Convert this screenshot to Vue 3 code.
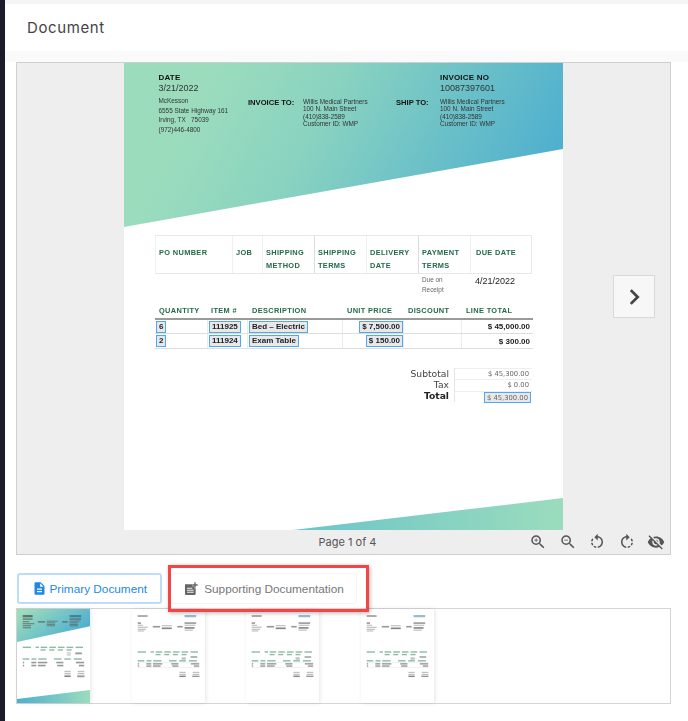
<script setup>
const terms = [
  ['PO NUMBER'], ['JOB'], ['SHIPPING', 'METHOD'], ['SHIPPING', 'TERMS'],
  ['DELIVERY', 'DATE'], ['PAYMENT', 'TERMS'], ['DUE DATE']
]
const lineHeads = ['QUANTITY', 'ITEM #', 'DESCRIPTION', 'UNIT PRICE', 'DISCOUNT', 'LINE TOTAL']
const lines = [
  { qty: '6', item: '111925', desc: 'Bed – Electric', price: '$ 7,500.00', total: '$ 45,000.00' },
  { qty: '2', item: '111924', desc: 'Exam Table', price: '$ 150.00', total: '$ 300.00' }
]
const addressee = ['Willis Medical Partners', '100 N. Main Street', '(410)838-2589', 'Customer ID: WMP']

const G = '#3f8f68'
const K = '#555'
const L = '#999'
const firstThumb = [
  [34, 30, 60, 11, '#333'], [316, 30, 70, 11, '#2c5a7a'], [34, 46, 60, 8, K], [316, 46, 70, 8, K],
  [34, 60, 40, 6, K], [34, 70, 70, 6, K], [34, 80, 50, 6, K], [34, 90, 50, 6, K],
  [125, 60, 44, 8, K], [179, 58, 65, 5, K], [179, 66, 50, 5, K], [179, 74, 50, 5, K], [179, 81, 50, 5, K],
  [272, 60, 33, 8, K], [316, 58, 65, 5, K], [316, 66, 50, 5, K], [316, 74, 50, 5, K], [316, 81, 50, 5, K],
  [34, 187, 50, 7, G], [112, 187, 20, 7, G], [142, 187, 40, 7, G], [142, 200, 30, 7, G], [194, 187, 40, 7, G], [194, 200, 30, 7, G],
  [246, 187, 40, 7, G], [246, 200, 30, 7, G], [298, 187, 40, 7, G], [298, 200, 30, 7, G], [352, 187, 45, 7, G],
  [299, 215, 25, 6, L], [299, 225, 25, 6, L], [350, 216, 40, 9, K],
  [34, 245, 40, 7, G], [87, 245, 30, 7, G], [128, 245, 50, 7, G], [223, 245, 45, 7, G], [284, 245, 40, 7, G], [342, 245, 48, 7, G],
  [35, 262, 8, 8, K], [86, 262, 30, 8, K], [126, 262, 56, 8, K], [236, 262, 43, 8, K], [354, 262, 50, 8, K],
  [35, 277, 8, 8, K], [86, 277, 30, 8, K], [126, 277, 46, 8, K], [242, 277, 37, 8, K], [372, 277, 32, 8, K],
  [285, 307, 38, 7, L], [285, 318, 38, 7, L], [285, 330, 38, 8, '#333'], [365, 307, 40, 7, L], [365, 318, 40, 7, L], [362, 330, 44, 9, K]
]
const plainThumb = [
  [34, 30, 60, 10, '#777'], [316, 30, 70, 11, '#4d8fb5'], [34, 66, 20, 8, K], [316, 66, 70, 8, K],
  [34, 78, 32, 6, L], [34, 88, 60, 6, L], [34, 98, 50, 6, L], [34, 106, 40, 6, L],
  [125, 84, 44, 8, K], [179, 80, 60, 6, L], [179, 92, 60, 8, '#333'], [272, 84, 33, 8, K], [316, 78, 65, 6, L], [316, 90, 60, 8, '#333'], [316, 102, 50, 6, L],
  [34, 210, 50, 7, G], [112, 210, 20, 7, G], [142, 210, 40, 7, G], [142, 223, 30, 7, G], [194, 210, 40, 7, G], [194, 223, 30, 7, G],
  [246, 210, 40, 7, G], [246, 223, 30, 7, G], [298, 210, 40, 7, G], [298, 223, 30, 7, G], [352, 210, 45, 7, G],
  [298, 240, 25, 12, L], [352, 235, 40, 7, K],
  [34, 254, 40, 7, G], [87, 254, 30, 7, G], [128, 254, 50, 7, G], [223, 254, 45, 7, G], [284, 254, 40, 7, G], [342, 254, 48, 7, G],
  [34, 265, 372, 1, L], [35, 269, 8, 7, K], [86, 269, 30, 7, K], [126, 269, 56, 7, K], [236, 269, 43, 7, K], [354, 269, 50, 7, K],
  [35, 280, 8, 7, K], [86, 280, 30, 7, K], [126, 280, 46, 7, K], [242, 280, 37, 7, K], [372, 280, 32, 7, K], [34, 290, 372, 1, L],
  [285, 312, 38, 6, L], [285, 322, 38, 6, L], [285, 331, 38, 7, '#333'], [365, 312, 40, 6, L], [365, 322, 40, 6, L], [362, 331, 44, 7, K]
]
const thumbs = [
  { id: 1, first: true, rects: firstThumb },
  { id: 2, first: false, rects: plainThumb },
  { id: 3, first: false, rects: plainThumb },
  { id: 4, first: false, rects: plainThumb }
]

const lens = 'M15.5 14h-.79l-.28-.27A6.471 6.471 0 0 0 16 9.5 6.5 6.5 0 1 0 9.5 16c1.61 0 3.09-.59 4.23-1.57l.27.28v.79l5 4.99L20.49 19l-4.99-5zm-6 0C7.01 14 5 11.99 5 9.5S7.01 5 9.5 5 14 7.01 14 9.5 11.99 14 9.5 14z'
const tools = [
  { id: 'in', d: lens + 'M12 10h-2v2H9v-2H7V9h2V7h1v2h2v1z' },
  { id: 'out', d: lens + 'M7 9h5v1H7z' },
  { id: 'left', d: 'M7.11 8.53L5.7 7.11C4.8 8.27 4.24 9.61 4.07 11h2.02c.14-.87.49-1.72 1.02-2.47zM6.09 13H4.07c.17 1.39.72 2.73 1.62 3.89l1.41-1.42c-.52-.75-.87-1.59-1.01-2.47zm1.01 5.32c1.16.9 2.51 1.44 3.9 1.61V17.9c-.87-.15-1.71-.49-2.46-1.03L7.1 18.32zM13 4.07V1L8.45 5.55 13 10V6.09c2.84.48 5 2.94 5 5.91s-2.16 5.43-5 5.91v2.02c3.95-.49 7-3.85 7-7.93s-3.05-7.44-7-7.93z' },
  { id: 'right', d: 'M15.55 5.55L11 1v3.07C7.06 4.56 4 7.92 4 12s3.05 7.44 7 7.93v-2.02c-2.84-.48-5-2.94-5-5.91s2.16-5.43 5-5.91V10l4.55-4.45zM19.93 11c-.17-1.39-.72-2.73-1.62-3.89l-1.42 1.42c.54.75.88 1.6 1.02 2.47h2.02zM13 17.9v2.02c1.39-.17 2.74-.71 3.9-1.61l-1.44-1.44c-.75.54-1.59.89-2.46 1.03zm3.89-2.42l1.42 1.41c.9-1.16 1.45-2.5 1.62-3.89h-2.02c-.14.87-.48 1.72-1.02 2.48z' },
  { id: 'hide', d: 'M12 7c2.76 0 5 2.24 5 5 0 .65-.13 1.26-.36 1.83l2.92 2.92c1.51-1.26 2.7-2.89 3.43-4.75-1.73-4.39-6-7.5-11-7.5-1.4 0-2.74.25-3.98.7l2.16 2.16C10.74 7.13 11.35 7 12 7zM2 4.27l2.28 2.28.46.46C3.08 8.3 1.78 10.02 1 12c1.73 4.39 6 7.5 11 7.5 1.55 0 3.03-.3 4.38-.84l.42.42L19.73 22 21 20.73 3.27 3 2 4.27zM7.53 9.8l1.55 1.55c-.05.21-.08.43-.08.65 0 1.66 1.34 3 3 3 .22 0 .44-.03.65-.08l1.55 1.55c-.67.33-1.41.53-2.2.53-2.76 0-5-2.24-5-5 0-.79.2-1.53.53-2.2zm4.31-.78l3.15 3.15.02-.16c0-1.66-1.34-3-3-3l-.17.01z' }
]
</script>

<template>
  <div class="app">
    <aside class="rail"></aside>
    <main class="main">
      <header class="head">Document</header>
      <div class="band"></div>

      <section class="viewer">
        <article class="doc">
          <div class="hero">
            <div class="date">
              <b class="cap">DATE</b>
              <span class="big">3/21/2022</span>
            </div>
            <div class="invno">
              <b class="cap">INVOICE NO</b>
              <span class="big">10087397601</span>
            </div>
            <div class="from">McKesson<br />6555 State Highway 161<br />Irving, TX &nbsp; 75039<br />(972)446-4800</div>
            <b class="lab">INVOICE TO:</b>
            <div class="addr"><div v-for="a in addressee" :key="a">{{ a }}</div></div>
            <b class="lab">SHIP TO:</b>
            <div class="addr"><div v-for="a in addressee" :key="a">{{ a }}</div></div>
          </div>

          <div class="terms">
            <div v-for="(t, i) in terms" :key="i" class="term">
              <div v-for="w in t" :key="w">{{ w }}</div>
            </div>
          </div>
          <div class="due">
            <div class="duetxt">Due on<br />Receipt</div>
            <div class="duedate">4/21/2022</div>
          </div>

          <div class="lhead">
            <div v-for="h in lineHeads" :key="h">{{ h }}</div>
          </div>
          <div class="lrows">
            <div v-for="l in lines" :key="l.item" class="lrow">
              <div class="c"><span class="hl">{{ l.qty }}</span></div>
              <div class="c"><span class="hl">{{ l.item }}</span></div>
              <div class="c"><span class="hl">{{ l.desc }}</span></div>
              <div class="c end"><span class="hl">{{ l.price }}</span></div>
              <div class="c"></div>
              <div class="c end tot">{{ l.total }}</div>
            </div>
          </div>

          <div class="sum">
            <div class="sumlab">
              <div>Subtotal</div>
              <div>Tax</div>
              <div><b>Total</b></div>
            </div>
            <div class="sumval">
              <div>$ 45,300.00</div>
              <div>$ 0.00</div>
              <div><span class="hl">$ 45,300.00</span></div>
            </div>
          </div>

          <div class="foot"></div>
        </article>

        <div class="bar">
          <span class="pg">Page 1 of 4</span>
          <div class="tools">
            <svg v-for="t in tools" :key="t.id" class="tool" viewBox="0 0 24 24"><path :d="t.d" /></svg>
          </div>
        </div>

        <button class="next" type="button" aria-label="Next">
          <svg viewBox="0 0 24 24" width="22" height="22"><path d="M8.5 4.5 16 12l-7.5 7.5" fill="none" stroke="#444" stroke-width="3" /></svg>
        </button>
      </section>

      <nav class="tabs">
        <button class="tab on" type="button">
          <svg viewBox="0 0 24 24" width="15" height="15"><path d="M14 2H6c-1.1 0-1.99.9-1.99 2L4 20c0 1.1.89 2 1.99 2H18c1.1 0 2-.9 2-2V8l-6-6zm2 16H8v-2h8v2zm0-4H8v-2h8v2zm-3-5V3.5L18.5 9H13z" fill="#1e88e5" /></svg>
          Primary Document
        </button>
        <button class="tab off" type="button">
          <svg viewBox="0 0 24 24" width="16" height="16"><path d="M3 5h11v3h3v3h2v8c0 1.1-.9 2-2 2H5c-1.1 0-2-.9-2-2z" fill="#666" /><path d="M6 10h8v1.6H6zM6 13h10v1.6H6zM6 16h10v1.6H6z" fill="#eee" /><path d="M19 2h-2v3h-3v2h3v3h2V7h3V5h-3z" fill="#666" /></svg>
          Supporting Documentation
        </button>
        <div class="mark"></div>
      </nav>

      <section class="thumbs">
        <div v-for="t in thumbs" :key="t.id" class="thumb">
          <svg viewBox="0 0 439 467" preserveAspectRatio="none" width="73" height="94">
            <defs>
              <linearGradient :id="'gr' + t.id" x1="0" y1="0" x2="1" y2="0.6">
                <stop offset="0.1" stop-color="#9bdcbd" />
                <stop offset="0.95" stop-color="#4eafcf" />
              </linearGradient>
              <linearGradient :id="'gb' + t.id" x1="0" y1="0" x2="1" y2="0">
                <stop offset="0" stop-color="#4eafcf" />
                <stop offset="1" stop-color="#9bdcbd" />
              </linearGradient>
            </defs>
            <template v-if="t.first">
              <polygon points="0,0 439,0 439,86 0,164" :fill="'url(#gr' + t.id + ')'" />
              <polygon points="0,447 439,402 439,467 0,467" :fill="'url(#gb' + t.id + ')'" />
            </template>
            <g class="ink">
              <rect v-for="(r, i) in t.rects" :key="i" :x="r[0]" :y="r[1]" :width="r[2]" :height="r[3]" :fill="r[4]" />
            </g>
          </svg>
        </div>
      </section>
    </main>
  </div>
</template>

<style scoped>
.app {
  display: flex;
  width: 688px;
  height: 721px;
  overflow: hidden;
  background: #fff;
  font-family: "Liberation Sans", Arial, sans-serif;
}
.rail {
  width: 5px;
  flex: none;
  background: #1b1b2b;
}
.main {
  position: relative;
  flex: 1;
  min-width: 0;
  display: flex;
  flex-direction: column;
}
.head {
  height: 47px;
  box-sizing: content-box;
  border-top: 4px solid #f5f5f8;
  padding-left: 22px;
  display: flex;
  align-items: center;
  font-family: Inter, "Open Sans", sans-serif;
  font-size: 15px;
  letter-spacing: 0.6px;
  color: #444;
}
.band {
  height: 11px;
  background: #fafafa;
}
.viewer {
  position: relative;
  margin: 0 17px 0 11px;
  height: 493px;
  box-sizing: border-box;
  border: 1px solid #cfcfcf;
  background: #eee;
  display: flex;
  flex-direction: column;
  align-items: center;
}
.doc {
  width: 439px;
  height: 467px;
  flex: none;
  background: #fff;
  display: flex;
  flex-direction: column;
  color: #222;
  filter: blur(0.3px);
}
.hero {
  height: 164px;
  flex: none;
  box-sizing: border-box;
  padding: 9px 0 0 34.5px;
  background: linear-gradient(118deg, #9bdcbd 18%, #8ad3c0 42%, #4eafcf 92%);
  clip-path: polygon(0 0, 100% 0, 100% 86px, 0 100%);
  display: grid;
  grid-template-columns: 89.5px 55px 93px 44px 1fr;
  grid-template-rows: 23px auto;
  align-items: start;
}
.date { grid-column: 1 / 5; }
.invno { grid-column: 5; }
.date, .invno { display: flex; flex-direction: column; }
.cap { font-size: 8px; line-height: 11px; letter-spacing: 0.2px; color: #111; }
.big { font-size: 9px; line-height: 11px; color: #333; }
.from { font-size: 6.4px; line-height: 9.5px; color: #333; margin-top: 1px; white-space: nowrap; }
.lab { font-size: 7.6px; line-height: 10px; margin-top: 3px; color: #111; white-space: nowrap; }
.addr { font-size: 6.4px; line-height: 7.3px; color: #333; margin-top: 3px; white-space: nowrap; }

.terms, .due {
  display: grid;
  grid-template-columns: 77px 30px 52px 52px 52px 52px 62px;
  width: 377px;
  margin-left: 31px;
}
.terms {
  margin-top: 8px;
  height: 39px;
  box-sizing: border-box;
  border: 1px solid #e8e8e8;
  border-left-color: #f0f0f0;
}
.term {
  border-right: 1px solid #f0f0f0;
  padding: 11px 0 0 3px;
  font-size: 7.4px;
  font-weight: 700;
  line-height: 12.6px;
  letter-spacing: 0.35px;
  color: #23694a;
  white-space: nowrap;
}
.term:nth-child(3), .term:nth-child(5) { border-right: 1px solid #dcdcdc; }
.term:last-child { border-right: 0; padding-left: 5px; }
.due { height: 31px; }
.duetxt {
  grid-column: 6;
  padding: 1px 0 0 4px;
  font-size: 6.4px;
  line-height: 9.6px;
  color: #666;
}
.duedate {
  grid-column: 7;
  padding: 1px 0 0 5px;
  font-size: 9px;
  line-height: 12px;
  color: #222;
}
.lhead, .lrow {
  display: grid;
  grid-template-columns: 53px 40px 95px 61px 58px 71px;
  width: 378px;
  margin-left: 31px;
}
.lhead {
  height: 13px;
  align-items: start;
  font-size: 7.4px;
  font-weight: 700;
  line-height: 11px;
  letter-spacing: 0.35px;
  color: #23694a;
  white-space: nowrap;
}
.lhead > div { padding-left: 4px; }
.lhead > div:nth-child(2) { padding-left: 3px; }
.lrows {
  border-top: 2px solid #9a9a9a;
  width: 378px;
  margin-left: 31px;
}
.lrow {
  margin-left: 0;
  height: 15px;
  box-sizing: border-box;
  border-bottom: 1px solid #ddd;
}
.lrow:first-child { height: 14px; }
.c {
  display: flex;
  align-items: center;
  padding-left: 1px;
  border-right: 1px solid #ececec;
  font-size: 8px;
  font-weight: 700;
  color: #222;
  white-space: nowrap;
}
.c:last-child { border-right: 0; }
.end { justify-content: flex-end; padding-left: 0; }
.tot { padding-right: 3px; }
.hl {
  display: inline-block;
  box-sizing: border-box;
  height: 12px;
  line-height: 10px;
  padding: 0 2px;
  background: #e8e8e8;
  border: 1px solid #4ea8f5;
}
.sum {
  display: flex;
  justify-content: flex-end;
  width: 408px;
  margin-top: 19px;
  gap: 5px;
}
.sumlab {
  font-family: "DejaVu Sans", sans-serif;
  font-size: 9.2px;
  line-height: 11.2px;
  text-align: right;
  color: #444;
}
.sumlab b { color: #222; }
.sumval {
  width: 78px;
  box-sizing: border-box;
  border-left: 1px solid #e5e5e5;
  font-family: "DejaVu Sans", sans-serif;
  font-size: 6.8px;
  color: #666;
  text-align: right;
}
.sumval > div {
  height: 11.3px;
  line-height: 11px;
  padding-right: 3px;
  border-top: 1px solid #eee;
  box-sizing: border-box;
}
.sumval .hl { padding: 0 2px; height: 11px; margin-right: -2px; }
.foot {
  margin-top: auto;
  height: 32px;
  flex: none;
  background: linear-gradient(90deg, #6cc4c9 38%, #9bdcbd 100%);
  clip-path: polygon(169px 100%, 100% 0, 100% 100%);
}
.bar {
  flex: 1;
  width: 100%;
  display: grid;
  grid-template-columns: 1fr auto 1fr;
  align-items: center;
}
.pg {
  grid-column: 2;
  padding-left: 8px;
  font-family: Inter, "Open Sans", sans-serif;
  font-size: 11px;
  color: #555;
}
.tools {
  grid-column: 3;
  justify-self: end;
  display: flex;
  gap: 11.5px;
  padding-right: 5px;
  margin-left: -60px;
}
.tool {
  width: 18px;
  height: 18px;
  fill: #555;
}
.next {
  position: absolute;
  top: 212px;
  right: 15px;
  width: 42px;
  height: 43px;
  padding: 0;
  border: 1px solid #d9d9d9;
  background: #f7f7f7;
  display: flex;
  align-items: center;
  justify-content: center;
}
.tabs {
  position: relative;
  display: flex;
  gap: 8px;
  margin: 18px 0 0 12px;
  height: 31px;
}
.tab {
  display: flex;
  align-items: center;
  justify-content: center;
  height: 31px;
  box-sizing: border-box;
  background: #fff;
  font-family: "Liberation Sans", Arial, sans-serif;
  font-size: 11.8px;
  padding: 0;
  border-radius: 3px;
}
.on {
  width: 145px;
  gap: 2.5px;
  border: 2px solid #bcdcfb;
  color: #1e88e5;
}
.off {
  width: 187px;
  gap: 5px;
  border: 1px solid #f4f4f4;
  color: #777;
}
.mark {
  position: absolute;
  z-index: 2;
  left: 151px;
  top: -8px;
  width: 201px;
  height: 47px;
  box-sizing: border-box;
  border: 3px solid #f44444;
  box-shadow: 1px 1px 4px rgba(0, 0, 0, 0.3);
  pointer-events: none;
}
.thumbs {
  margin: 4px 17px 0 11px;
  height: 96px;
  box-sizing: border-box;
  border: 1px solid #d5d5d5;
  display: flex;
  gap: 41.5px;
  background: #fff;
}
.thumb {
  width: 73px;
  height: 94px;
  flex: none;
  box-shadow: 1px 0 4px rgba(0, 0, 0, 0.1);
}
.thumb svg { display: block; }
.ink { filter: blur(3px); opacity: 0.6; }
</style>
